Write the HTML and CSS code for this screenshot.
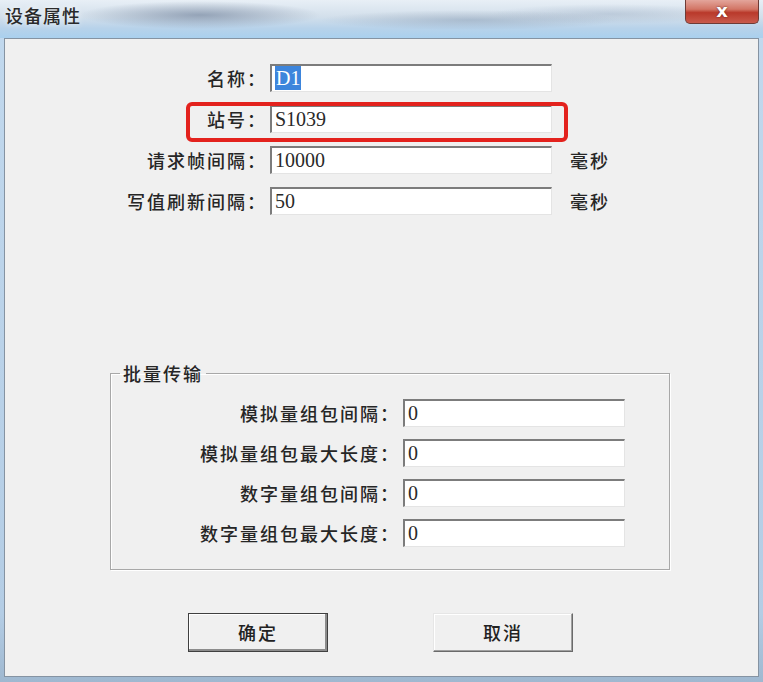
FILE: index.html
```html
<!DOCTYPE html>
<html lang="zh-CN">
<head>
    <meta charset="UTF-8">
    <title>设备属性</title>
    <link rel="stylesheet" href="styles.css">
</head>
<body>

<div class="window">
    <div class="titlebar">
        <span class="title">设备属性</span>
        <div class="close">x</div>
    </div>

    <div class="client">
        <div class="form-top">
            <label>名称：</label>
            <div class="field"><span class="sel">D1</span></div>
            <span></span>

            <label>站号：</label>
            <div class="field">S1039</div>
            <span></span>

            <label>请求帧间隔：</label>
            <div class="field">10000</div>
            <span class="unit">毫秒</span>

            <label>写值刷新间隔：</label>
            <div class="field">50</div>
            <span class="unit">毫秒</span>
        </div>

        <!-- red annotation box over the station row -->
        <div class="mark"></div>

        <fieldset class="group">
            <legend>批量传输</legend>
            <div class="form-group">
                <label>模拟量组包间隔：</label>
                <div class="field">0</div>
                <label>模拟量组包最大长度：</label>
                <div class="field">0</div>
                <label>数字量组包间隔：</label>
                <div class="field">0</div>
                <label>数字量组包最大长度：</label>
                <div class="field">0</div>
            </div>
        </fieldset>

        <div class="buttons">
            <div class="btn default">确定</div>
            <div class="btn">取消</div>
        </div>
    </div>
</div>

</body>
</html>
```

FILE: styles.css
```css
body {
    margin: 0;
    padding: 0;
    font-family: "Noto Sans CJK SC", sans-serif;
    color: #222;
}
.window {
    width: 763px;
    height: 682px;
    overflow: hidden;
    background: linear-gradient(to bottom, #c2d9ee, #b4cde5 90%, #9fb8d0);
}
.titlebar {
    height: 38px;
    display: flex;
    justify-content: space-between;
    align-items: flex-start;
    background:
        radial-gradient(ellipse 120px 14px at 200px 15px, rgba(105, 122, 148, 0.6), transparent),
        radial-gradient(ellipse 150px 10px at 470px 20px, rgba(120, 140, 165, 0.4), transparent),
        radial-gradient(ellipse 120px 10px at 610px 14px, rgba(140, 160, 185, 0.35), transparent),
        linear-gradient(to bottom, #e8eff6 0%, #d2dfeb 45%, #b7d2ea 75%, #a9d0ee 100%);
}
.title {
    padding-left: 5px;
    margin-top: 4px;
    font-size: 18px;
    font-weight: 500;
    line-height: 22px;
    letter-spacing: 1px;
    color: #2a2a2a;
    text-shadow: 0 0 6px rgba(255, 255, 255, 0.9);
}
.close {
    width: 72px;
    height: 23px;
    margin-right: 4px;
    border: 1px solid #6e3b36;
    border-top: none;
    border-radius: 0 0 5px 5px;
    background: linear-gradient(to bottom, #e3a59b 0%, #d27565 40%, #b9392b 55%, #c95a4c 100%);
    color: white;
    font-family: "DejaVu Sans", sans-serif;
    font-weight: bold;
    font-size: 18px;
    line-height: 21px;
    text-align: center;
    text-shadow: 0 0 2px #5a1a14;
}
.client {
    position: relative;
    box-sizing: border-box;
    height: 639px;
    margin: 0 4px;
    border: 1px solid #8593a2;
    background: #f0f0f0;
    padding-top: 25px;
}
.form-top {
    display: grid;
    grid-template-columns: 265px 282px auto;
    grid-auto-rows: 28px;
    row-gap: 13px;
}
label {
    text-align: right;
    padding-right: 3px;
    font-size: 18px;
    font-weight: 500;
    line-height: 28px;
    letter-spacing: 2px;
    color: #262626;
    white-space: nowrap;
}
.field {
    box-sizing: border-box;
    height: 28px;
    background: white;
    border-top: 2px solid #7c7c7c;
    border-left: 2px solid #7c7c7c;
    border-right: 1px solid #e4e4e4;
    border-bottom: 1px solid #e4e4e4;
    padding-left: 3px;
    font-family: "Liberation Serif", serif;
    font-size: 20px;
    line-height: 25px;
    color: #2a2a2a;
}
.sel {
    background: #3d85dc;
    color: white;
    padding: 1px 1px;
}
.unit {
    padding-left: 18px;
    font-size: 18px;
    font-weight: 500;
    line-height: 28px;
    letter-spacing: 2px;
    color: #262626;
}
.mark {
    position: absolute;
    left: 181px;
    top: 63px;
    width: 382px;
    height: 40px;
    box-sizing: border-box;
    border: 4px solid #e3221d;
    border-radius: 6px;
}
.group {
    box-sizing: border-box;
    width: 560px;
    height: 209px;
    margin: 146px 0 0 105px;
    padding: 0;
    border: 1px solid #a8a8a8;
    box-shadow: inset 1px 1px #fff, 1px 1px #fff;
}
.group legend {
    margin-left: 9px;
    padding: 0 3px;
    font-size: 18px;
    font-weight: 500;
    line-height: 24px;
    letter-spacing: 2px;
    color: #262626;
}
.form-group {
    display: grid;
    grid-template-columns: 292px 222px;
    grid-auto-rows: 28px;
    row-gap: 12px;
    margin-top: 14px;
}
.buttons {
    display: flex;
    gap: 105px;
    margin-top: 43px;
    padding-left: 183px;
}
.btn {
    box-sizing: border-box;
    width: 140px;
    height: 39px;
    background: #f0f0f0;
    border: 1px solid;
    border-color: #e6e6e6 #6a6a6a #6a6a6a #e6e6e6;
    box-shadow: inset -1px -1px #a0a0a0, inset 1px 1px #fff;
    font-size: 18px;
    font-weight: 500;
    line-height: 36px;
    letter-spacing: 2px;
    text-align: center;
    color: #222;
}
.btn.default {
    border: 1px solid #404040;
    box-shadow: inset -2px -2px #8c8c8c, inset 1px 1px #fff;
}
```
